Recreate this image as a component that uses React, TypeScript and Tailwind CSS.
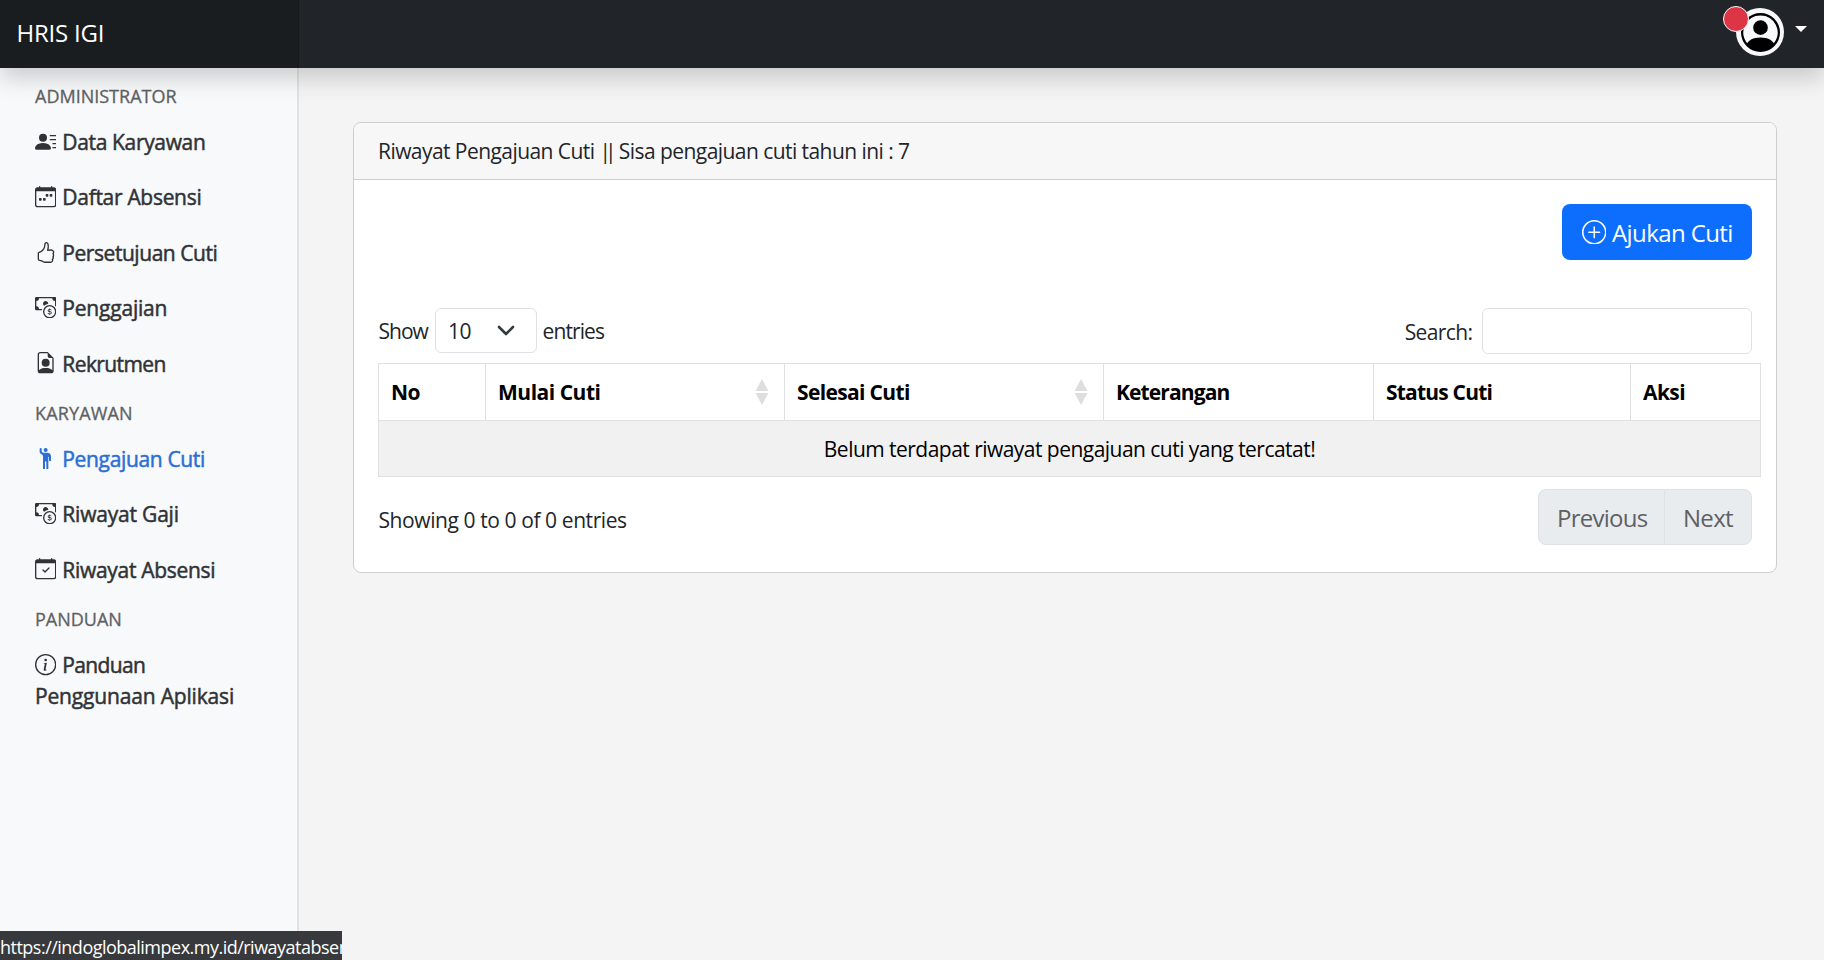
import type { ReactNode } from "react";
import type { IconType } from "react-icons";
import {
  BsCalendarCheck,
  BsCalendarWeek,
  BsCashCoin,
  BsFileEarmarkPerson,
  BsHandThumbsUp,
  BsInfoCircle,
  BsPersonCircle,
  BsPersonLinesFill,
  BsPersonRaisedHand,
  BsPlusCircle,
} from "react-icons/bs";

function MenuHeading({ children, tracking = "" }: { children: ReactNode; tracking?: string }) {
  return (
    <div
      className={`mt-[9.8px] mb-[6px] h-6 pl-[35px] text-[18px] leading-6 font-medium text-[#5f6163] [-webkit-text-stroke:0.3px] ${tracking}`}
    >
      {children}
    </div>
  );
}

interface MenuItemProps {
  icon: IconType;
  label: string;
  tracking: string;
  active?: boolean;
}

function MenuItem({ icon: Icon, label, tracking, active }: MenuItemProps) {
  return (
    <a
      className={`flex h-[55.4px] items-center pl-[35px] text-[21px] leading-[31px] font-medium ${
        active ? "text-[#2b6fd6]" : "text-[#303336]"
      }`}
    >
      <Icon className="mr-[6px] size-[21.33px] shrink-0" />
      <span className={`pt-[2px] whitespace-nowrap [-webkit-text-stroke:0.5px] ${tracking}`}>{label}</span>
    </a>
  );
}

function SortArrows() {
  return (
    <svg width="14" height="28" viewBox="0 0 14 28" className="shrink-0" fill="#dedede">
      <path d="M7 1 L13.5 13 H0.5 Z" />
      <path d="M7 27 L13.5 15 H0.5 Z" />
    </svg>
  );
}

const columns = [
  { label: "No", width: "w-[107px]", tracking: "tracking-[-0.57px]" },
  { label: "Mulai Cuti", width: "w-[299px]", tracking: "tracking-[-0.48px]", sortable: true },
  { label: "Selesai Cuti", width: "w-[319px]", tracking: "tracking-[-0.65px]", sortable: true },
  { label: "Keterangan", width: "w-[270px]", tracking: "tracking-[-0.88px]" },
  { label: "Status Cuti", width: "w-[257px]", tracking: "tracking-[-0.8px]" },
  { label: "Aksi", width: "w-[130px]", tracking: "tracking-[-0.6px]" },
];

export default function App() {
  return (
    <div className="relative flex h-[960px] w-[1824px] flex-col overflow-hidden bg-[#f4f4f4] font-['Open_Sans',sans-serif] text-[21px] leading-8 text-[#212529]">
      <header className="relative z-10 flex h-[68px] shrink-0 bg-[#212529] shadow-[0_10.7px_21.3px_rgba(0,0,0,0.17)]">
        <div className="flex w-[299px] items-center border-r border-[#16181b] bg-[#1a1d1f] pl-[16.5px] text-[24px] tracking-[-0.2px] text-white">
          <span className="-mt-[2px]">HRIS IGI</span>
        </div>
        <div className="flex flex-1 items-start justify-end pr-[17px]">
          <div className="relative mt-2 flex size-12 items-center justify-center rounded-full bg-[#f8f9fa]">
            <BsPersonCircle className="size-[39px] text-black" />
            <span className="absolute -top-[2px] -left-[13px] size-[26px] rounded-full border border-[#f8f9fa] bg-[#dc3545]" />
          </div>
          <svg width="12" height="6" viewBox="0 0 12 6" className="mt-[26px] ml-[11px]" fill="#fff">
            <path d="M0 0 H12 L6 6 Z" />
          </svg>
        </div>
      </header>

      <div className="flex min-h-0 flex-1">
        <nav className="w-[299px] shrink-0 border-r-2 border-[#e1e2e3] bg-[#f8f9fb] pt-[6px]">
          <div className="flex flex-col">
            <MenuHeading>ADMINISTRATOR</MenuHeading>
            <MenuItem icon={BsPersonLinesFill} label="Data Karyawan" tracking="tracking-[-0.35px]" />
            <MenuItem icon={BsCalendarWeek} label="Daftar Absensi" tracking="tracking-[-0.3px]" />
            <MenuItem icon={BsHandThumbsUp} label="Persetujuan Cuti" tracking="tracking-[-0.45px]" />
            <MenuItem icon={BsCashCoin} label="Penggajian" tracking="tracking-[-0.2px]" />
            <MenuItem icon={BsFileEarmarkPerson} label="Rekrutmen" tracking="tracking-[-0.6px]" />
            <MenuHeading tracking="tracking-[0.15px]">KARYAWAN</MenuHeading>
            <MenuItem icon={BsPersonRaisedHand} label="Pengajuan Cuti" tracking="tracking-[-0.35px]" active />
            <MenuItem icon={BsCashCoin} label="Riwayat Gaji" tracking="tracking-[-0.2px]" />
            <MenuItem icon={BsCalendarCheck} label="Riwayat Absensi" tracking="tracking-[-0.3px]" />
            <MenuHeading>PANDUAN</MenuHeading>
            <a className="pt-[13px] pl-[35px] text-[21px] leading-[31px] font-medium text-[#303336]">
              <span className="flex items-center">
                <BsInfoCircle className="mr-[6px] size-[21.33px]" />
                <span className="tracking-[-0.65px] [-webkit-text-stroke:0.5px]">Panduan</span>
              </span>
              <span className="block tracking-[-0.17px] [-webkit-text-stroke:0.5px]">Penggunaan Aplikasi</span>
            </a>
          </div>
        </nav>

        <main className="flex-1 pt-[54px] pl-[54px]">
          <section className="h-[451px] w-[1424px] rounded-lg border border-[#cdcecf] bg-white">
            <div className="h-[57px] rounded-t-[7px] border-b border-[#cdcecf] bg-[#f7f7f7] pl-6 leading-[57px] tracking-[-0.56px]">
              Riwayat Pengajuan Cuti <span className="tracking-[-6px]">|</span>
              <span className="tracking-[-2.5px]">|</span> Sisa pengajuan cuti tahun ini : 7
            </div>
            <div className="flex flex-col pt-6 pr-6 pl-6">
              <button className="flex h-14 w-[190px] items-center self-end rounded-lg bg-[#0d6efd] pl-[19.5px] text-[24px] text-white">
                <BsPlusCircle className="mr-[6px] size-[24.5px] shrink-0" />
                <span className="pt-[2px] tracking-[-0.6px] whitespace-nowrap">Ajukan Cuti</span>
              </button>

              <div className="mt-12 flex h-[46px] items-start justify-between">
                <label className="flex items-center">
                  <span className="w-[57px] pl-[0.5px] tracking-[-1px]">Show</span>
                  <span className="flex h-[45px] w-[102px] items-center justify-between rounded-[6px] border border-[#dee2e6] pr-[21px] pl-[12px]">
                    <span className="tracking-[-0.5px]">10</span>
                    <svg width="18" height="12" viewBox="0 0 18 12" fill="none" stroke="#343a40" strokeWidth="2.6" strokeLinecap="round" strokeLinejoin="round">
                      <path d="M2 2 L9 9 L16 2" />
                    </svg>
                  </span>
                  <span className="ml-[5.5px] tracking-[-0.89px]">entries</span>
                </label>
                <label className="flex items-center">
                  <span className="mt-[2px] mr-[9.5px] tracking-[-0.6px]">Search:</span>
                  <span className="h-[46px] w-[270px] rounded-[6px] border border-[#dee2e6]" />
                </label>
              </div>

              <table className="mt-[9px] w-[1383px] table-fixed border-collapse text-black">
                <thead>
                  <tr className="h-[57px]">
                    {columns.map((c) => (
                      <th key={c.label} className={`border border-[#dee0e2] p-0 pl-[12px] text-left font-bold ${c.width}`}>
                        <div className="flex items-center justify-between pr-[15px]">
                          <span className={c.tracking}>{c.label}</span>
                          {c.sortable && <SortArrows />}
                        </div>
                      </th>
                    ))}
                  </tr>
                </thead>
                <tbody>
                  <tr className="h-14">
                    <td colSpan={6} className="border border-[#dee0e2] bg-[#f1f1f1] p-0 text-center tracking-[-0.53px]">
                      Belum terdapat riwayat pengajuan cuti yang tercatat!
                    </td>
                  </tr>
                </tbody>
              </table>

              <div className="mt-3 flex justify-between">
                <div className="mt-[15px] pl-[0.5px] tracking-[-0.41px]">Showing 0 to 0 of 0 entries</div>
                <div className="flex h-14 w-[214px] overflow-hidden rounded-lg border border-[#dee2e6] bg-[#e9ecef] text-[24px] leading-[56px] text-[#5d6165]">
                  <span className="w-[126px] border-r border-[#dee2e6] pl-[18px] tracking-[-0.75px]">Previous</span>
                  <span className="pl-[18px] tracking-[-0.7px]">Next</span>
                </div>
              </div>
            </div>
          </section>
        </main>
      </div>

      <div className="absolute bottom-0 left-0 z-20 h-[29px] w-[342px] overflow-hidden bg-[#38393c] text-[18px] leading-[33px] tracking-[-0.51px] whitespace-nowrap text-white">
        https://indoglobalimpex.my.id/riwayatabsensi
      </div>
    </div>
  );
}
